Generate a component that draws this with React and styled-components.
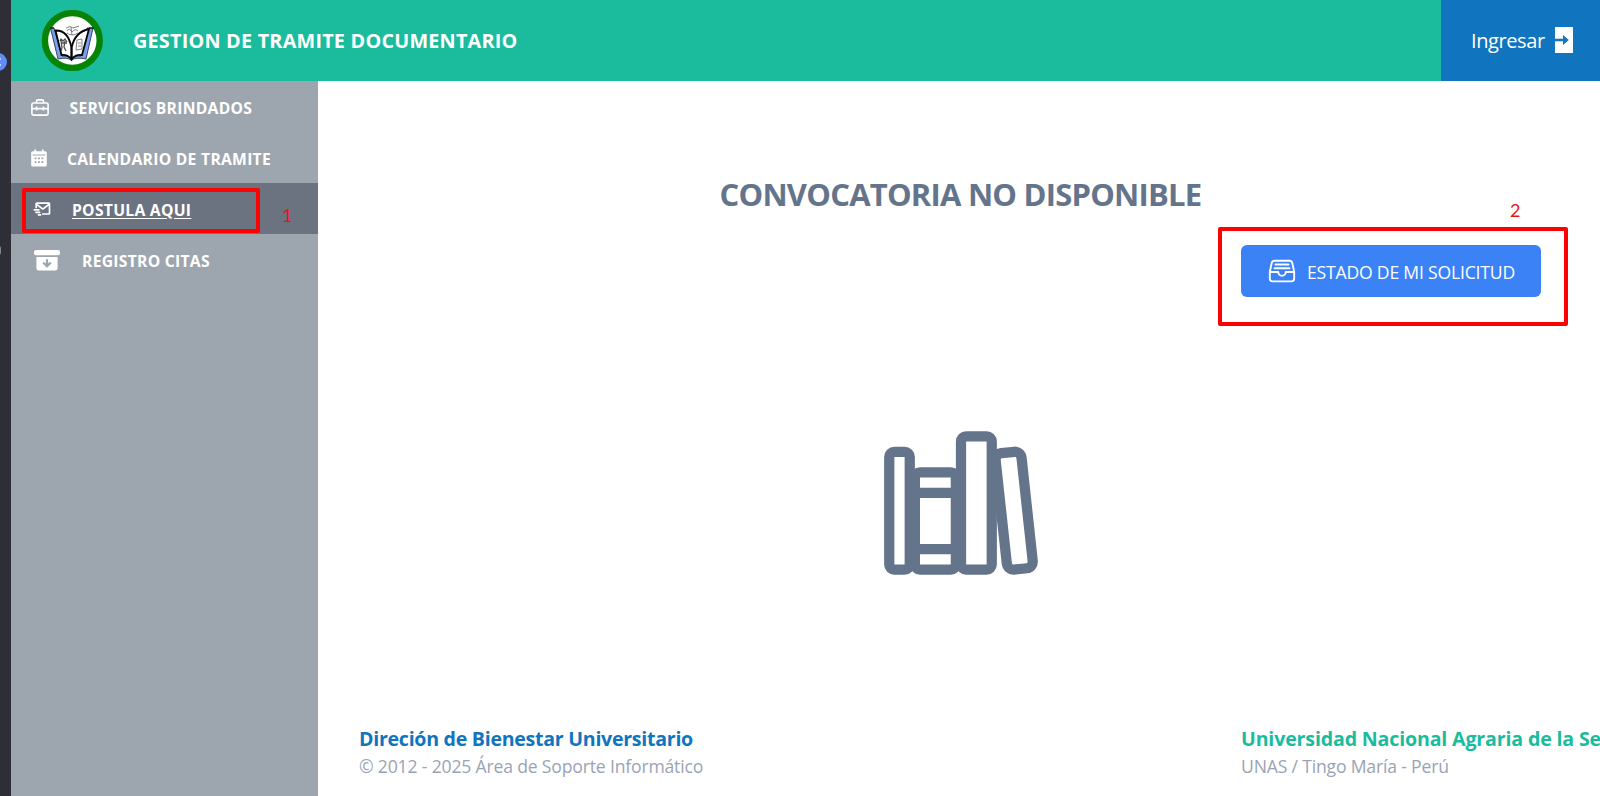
import React from "react";
import styled, { createGlobalStyle, css } from "styled-components";
import { IoLibraryOutline, IoFileTrayFullOutline } from "react-icons/io5";
import { BiMailSend } from "react-icons/bi";

const GlobalStyle = createGlobalStyle`
  *, *::before, *::after { box-sizing: border-box; }
  body {
    margin: 0;
    background: #fff;
    overflow: hidden;
    font-family: "Open Sans", "Noto Sans", sans-serif;
  }
  h1, h2, p { margin: 0; }
  a { color: inherit; text-decoration: none; }
  svg { display: block; flex: none; }
`;

const Page = styled.div`
  position: relative;
  display: flex;
  width: 100%;
  height: 796px;
  overflow: hidden;
`;

const EdgeStrip = styled.aside`
  position: relative;
  flex: none;
  width: 11px;
  overflow: hidden;
  background: #2e2e37;
`;

const EdgeBadge = styled.span`
  position: absolute;
  top: 53px;
  left: -11px;
  width: 18px;
  height: 18px;
  border-radius: 50%;
  background: #5f8df5;

  &::before, &::after {
    content: "";
    position: absolute;
    left: 11px;
    width: 1px;
    height: 2px;
    background: #c7d7fb;
  }
  &::before { top: 5px; }
  &::after { top: 11px; }
`;

const EdgeMark = styled.span`
  position: absolute;
  top: 246px;
  left: -4px;
  width: 5px;
  height: 9px;
  border-radius: 3px;
  background: #85868c;
`;

const Shell = styled.div`
  display: flex;
  flex-direction: column;
  flex: 1;
  min-width: 0;
`;

const Header = styled.header`
  display: flex;
  align-items: stretch;
  flex: none;
  height: 81px;
  padding-left: 30px;
  background: #1bbc9d;
  color: #fff;
`;

const Brand = styled.div`
  display: flex;
  align-items: center;
  flex: 1;
  gap: 30px;
`;

const BrandTitle = styled.h1`
  padding-top: 1px;
  font-size: 19.8px;
  line-height: 28px;
  font-weight: 700;
  letter-spacing: 0.23px;
  white-space: nowrap;
`;

const LoginLink = styled.a`
  display: flex;
  align-items: center;
  gap: 10px;
  width: 159px;
  padding: 1px 0 0 30px;
  background: #1075be;
  font-size: 20px;
  line-height: 28px;
  letter-spacing: -0.4px;

  svg { margin-top: -2px; }
`;

const Body = styled.div`
  display: flex;
  flex: 1;
  min-height: 0;
`;

const Sidebar = styled.nav`
  flex: none;
  width: 307px;
  background: #9da6ae;
`;

const NavItem = styled.a`
  display: flex;
  align-items: center;
  gap: ${(p) => p.$gap}px;
  height: 51px;
  padding: 2px 0 0 ${(p) => p.$inset}px;
  color: #fff;
  font-size: 15.7px;
  line-height: 24px;
  font-weight: 700;
  white-space: nowrap;
  letter-spacing: 0.27px;

  svg { margin-top: -1px; }

  ${(p) => p.$active && css`
    background: #6b7280;
    text-decoration: underline;
    text-underline-offset: 2px;
  `}
`;

const Main = styled.main`
  display: flex;
  flex-direction: column;
  flex: 1;
  min-width: 0;
  padding-top: 93px;
`;

const Heading = styled.h2`
  padding-left: 3px;
  color: #64748b;
  text-align: center;
  font-size: 31px;
  line-height: 40px;
  font-weight: 700;
  letter-spacing: -0.77px;
`;

const Actions = styled.div`
  display: flex;
  justify-content: flex-end;
  padding: 31px 59px 0 0;
`;

const StatusButton = styled.button`
  display: flex;
  align-items: center;
  gap: 10px;
  width: 300px;
  height: 52px;
  padding: 0 0 0 26px;
  border: 0;
  border-radius: 6px;
  background: #3b82f6;
  color: #fff;
  font: inherit;
  font-size: 17.6px;
  letter-spacing: -0.2px;
  white-space: nowrap;
`;

const ButtonLabel = styled.span`
  padding-top: 2px;
`;

const Illustration = styled.div`
  display: flex;
  justify-content: center;
  padding: 124px 0 0 3px;
  color: #64748b;
`;

const Footer = styled.footer`
  display: grid;
  grid-template-columns: 882px 1fr;
  margin-top: auto;
  padding: 0 0 16px 41px;
`;

const FooterTitle = styled.p`
  padding-top: 1px;
  color: ${(p) => p.$color};
  font-size: 19.6px;
  line-height: 28px;
  font-weight: 700;
  white-space: nowrap;
  letter-spacing: ${(p) => p.$track}px;
`;

const FooterNote = styled.p`
  color: #9aa3b5;
  font-size: 17.6px;
  line-height: 27px;
  white-space: nowrap;
  letter-spacing: -0.18px;
`;

const Highlight = styled.div`
  position: absolute;
  top: ${(p) => p.$top}px;
  left: ${(p) => p.$left}px;
  width: ${(p) => p.$width}px;
  height: ${(p) => p.$height}px;
  border: 4px solid #fb0203;
  border-radius: 2px;
  pointer-events: none;
`;

const StepNumber = styled.span`
  position: absolute;
  top: ${(p) => p.$top}px;
  left: ${(p) => p.$left}px;
  color: #e8141c;
  font-family: Lato, sans-serif;
  font-size: 18px;
  line-height: 24px;
`;

function Crest() {
  return (
    <svg width="62" height="62" viewBox="0 0 62 62">
      <circle cx="31.3" cy="30.5" r="27.4" fill="#fff" stroke="#078407" strokeWidth="6.4" />
      <path d="M9.5 18 L17 49 Q26 47 30 50 Q36 47 45 49 L52 18 L46 18 L40 46 L21 46 L13 18Z" fill="#7a9fec" stroke="#2d3550" strokeWidth="0.9" />
      <path d="M14.5 20.5 Q27 20 30.3 37 L30.3 49 Q26 44 20.5 45Z" fill="#fff" stroke="#050505" strokeWidth="1.8" />
      <path d="M48 19 Q34 22 30.8 37 L30.8 49 Q35 44 41 45Z" fill="#fff" stroke="#050505" strokeWidth="1.8" />
      <path d="M9 18 L13 18 M48 18 L53 18" stroke="#24272e" strokeWidth="1.4" />
      <g fill="none" stroke="#777" strokeWidth="0.9">
        <path d="M25 18 L29 16.5 L32 18 L38 16 M26 21 Q28 17 31 22 Q34 18 37 21 M26 23 Q31 27 37 23 M30 17 L31 25" />
        <path d="M36 30 L41 29 L41 39 L35 40Z M37 33 L40 33 M37 36 L40 36" />
      </g>
      <path d="M19 31 L20 29 L22 31 L24 29 L26 32 M20 30 L21 38 L20 41 M24 31 L23 37 L25 41 M21 33 L26 33" stroke="#4a4f52" strokeWidth="1.3" fill="none" />
    </svg>
  );
}

function EnterIcon() {
  return (
    <svg width="18" height="26" viewBox="0 0 18 26">
      <path d="M0 0H18V26H0Z" fill="#fff" />
      <path d="M0 11.7H8V8L13.8 13L8 18V14.3H0Z" fill="#1075be" />
    </svg>
  );
}

function ToolboxIcon() {
  return (
    <svg width="18" height="17" viewBox="0 0 18 17" fill="none" stroke="currentColor" strokeWidth="1.6">
      <rect x="0.9" y="4" width="16.2" height="12.1" rx="1.5" />
      <path d="M5.5 4V2.4Q5.5 0.9 7 0.9H11Q12.5 0.9 12.5 2.4V4M1 9.6H17M5.6 7.6V11.6M12.4 7.6V11.6" />
    </svg>
  );
}

function CalendarIcon() {
  return (
    <svg width="16" height="18" viewBox="0 0 16 18" fill="currentColor">
      <path
        fillRule="evenodd"
        d="M3.3 0.5h1.8V2.2h5.8V0.5h1.8V2.2H14.2A1.6 1.6 0 0 1 15.8 3.8V16A1.6 1.6 0 0 1 14.2 17.6H1.8A1.6 1.6 0 0 1 0.2 16V3.8A1.6 1.6 0 0 1 1.8 2.2H3.3ZM1.5 5.5v0.9h13V5.5ZM3.6 8.6v1.7h1.9V8.6ZM7 8.6v1.7h1.9V8.6ZM10.4 8.6v1.7h1.9V8.6ZM3.6 12.3v1.7h1.9v-1.7ZM7 12.3v1.7h1.9v-1.7ZM10.4 12.3v1.7h1.9v-1.7Z"
      />
    </svg>
  );
}

function ArchiveIcon() {
  return (
    <svg width="26" height="21" viewBox="0 0 26 21" fill="currentColor">
      <rect x="0" y="0" width="26" height="5.2" rx="2" />
      <path
        fillRule="evenodd"
        d="M2.4 7H23.6V18.2A2.4 2.4 0 0 1 21.2 20.6H4.8A2.4 2.4 0 0 1 2.4 18.2ZM11.9 9.2V13.4L9.9 11.8L8.5 13.4L13 17.8L17.5 13.4L16.1 11.8L14.1 13.4V9.2Z"
      />
    </svg>
  );
}

export default function App() {
  return (
    <Page>
      <GlobalStyle />
      <EdgeStrip>
        <EdgeBadge />
        <EdgeMark />
      </EdgeStrip>
      <Shell>
        <Header>
          <Brand>
            <Crest />
            <BrandTitle>GESTION DE TRAMITE DOCUMENTARIO</BrandTitle>
          </Brand>
          <LoginLink>
            Ingresar
            <EnterIcon />
          </LoginLink>
        </Header>
        <Body>
          <Sidebar>
            <NavItem $inset={20} $gap={20.5}>
              <ToolboxIcon />
              SERVICIOS BRINDADOS
            </NavItem>
            <NavItem $inset={20} $gap={20}>
              <CalendarIcon />
              CALENDARIO DE TRAMITE
            </NavItem>
            <NavItem $inset={21} $gap={20} $active>
              <BiMailSend size={20} />
              POSTULA AQUI
            </NavItem>
            <NavItem $inset={23} $gap={22}>
              <ArchiveIcon />
              REGISTRO CITAS
            </NavItem>
          </Sidebar>
          <Main>
            <Heading>CONVOCATORIA NO DISPONIBLE</Heading>
            <Actions>
              <StatusButton>
                <IoFileTrayFullOutline size={30} />
                <ButtonLabel>ESTADO DE MI SOLICITUD</ButtonLabel>
              </StatusButton>
            </Actions>
            <Illustration>
              <IoLibraryOutline size={164} />
            </Illustration>
            <Footer>
              <div>
                <FooterTitle $color="#1075be" $track={-0.28}>Direción de Bienestar Universitario</FooterTitle>
                <FooterNote>© 2012 - 2025 Área de Soporte Informático</FooterNote>
              </div>
              <div>
                <FooterTitle $color="#1bbc9d" $track={-0.16}>Universidad Nacional Agraria de la Selva</FooterTitle>
                <FooterNote>UNAS / Tingo María - Perú</FooterNote>
              </div>
            </Footer>
          </Main>
        </Body>
      </Shell>
      <Highlight $top={188} $left={22} $width={238} $height={45} />
      <StepNumber $top={203} $left={282}>1</StepNumber>
      <Highlight $top={227} $left={1218} $width={350} $height={99} />
      <StepNumber $top={198} $left={1510}>2</StepNumber>
    </Page>
  );
}
